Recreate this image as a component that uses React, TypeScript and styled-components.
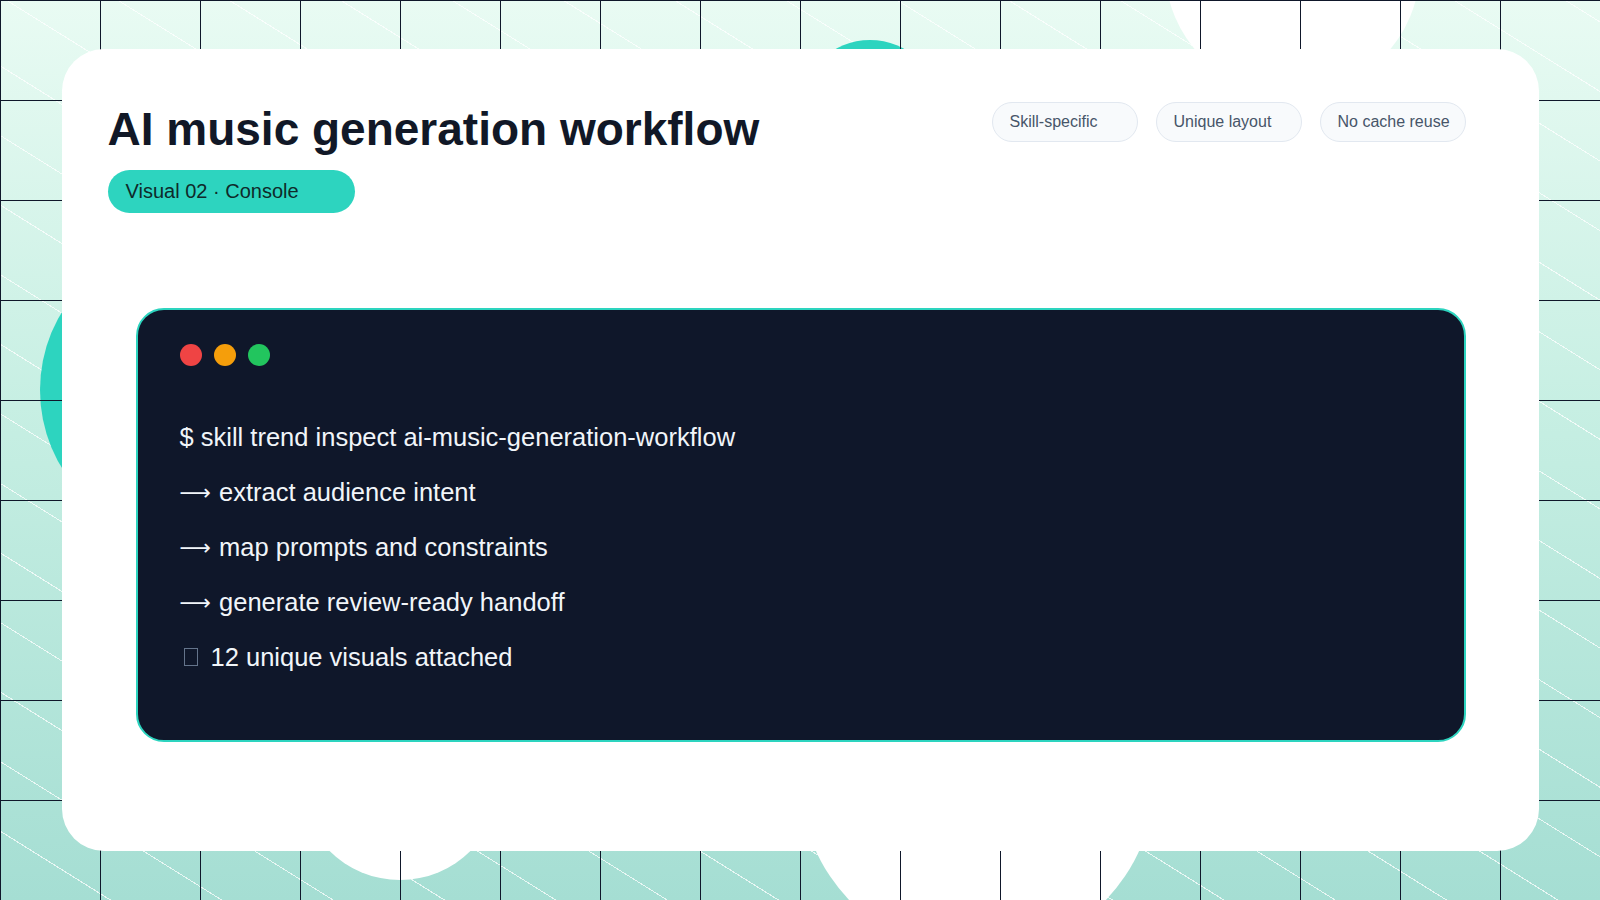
import React from 'react';
import styled, { createGlobalStyle } from 'styled-components';

const GlobalStyle = createGlobalStyle`
  html, body { margin: 0; padding: 0; }
  body { font-family: "Liberation Sans", Arial, sans-serif; }
`;

const Page = styled.div`
  position: relative;
  width: 1600px;
  height: 900px;
  overflow: hidden;
  background: linear-gradient(180deg, #e9fbf3 0%, #c7efe3 45%, #a5ded3 100%);
  display: flex;
  align-items: flex-start;
  justify-content: center;
  padding-top: 49px;
  box-sizing: border-box;
`;

const Stripes = styled.div`
  position: absolute;
  inset: 0;
  background-image: repeating-linear-gradient(
    32deg,
    transparent 0px,
    transparent 58px,
    rgba(255, 255, 255, 0.75) 58px,
    rgba(255, 255, 255, 0.75) 59px
  );
`;

const Blob = styled.div<{ $x: number; $y: number; $size: number; $color: string }>`
  position: absolute;
  left: ${(p) => p.$x}px;
  top: ${(p) => p.$y}px;
  width: ${(p) => p.$size}px;
  height: ${(p) => p.$size}px;
  border-radius: 50%;
  background: ${(p) => p.$color};
`;

const Grid = styled.div`
  position: absolute;
  inset: 0;
  background-image:
    linear-gradient(to right, #0f172a 1px, transparent 1px),
    linear-gradient(to bottom, #0f172a 1px, transparent 1px);
  background-size: 100px 100px;
`;

const Card = styled.div`
  position: relative;
  width: 1477px;
  height: 802px;
  background: #fff;
  border-radius: 42px;
  box-sizing: border-box;
  padding: 55px 73px 0 46px;
  display: flex;
  flex-direction: column;
`;

const Header = styled.div`
  display: flex;
  justify-content: space-between;
  align-items: flex-start;
`;

const TitleBlock = styled.div`
  display: flex;
  flex-direction: column;
  gap: 15px;
`;

const Title = styled.h1`
  margin: 0;
  font-size: 46px;
  font-weight: 700;
  color: #111827;
  line-height: 1.1;
`;

const Badge = styled.div`
  width: 247px;
  height: 43px;
  box-sizing: border-box;
  border-radius: 22px;
  background: #2dd4bf;
  color: #0f2a2a;
  font-size: 20px;
  display: flex;
  align-items: center;
  padding-left: 18px;
`;

const Tags = styled.div`
  display: flex;
  gap: 18px;
  margin-top: -2px;
`;

const Tag = styled.div`
  width: 146px;
  height: 40px;
  box-sizing: border-box;
  border: 1px solid #e2e8f0;
  background: #f8fafc;
  border-radius: 20px;
  color: #475569;
  font-size: 16px;
  display: flex;
  align-items: center;
  padding-left: 17px;
`;

const Console = styled.div`
  margin: 95px 0 0 28px;
  height: 434px;
  background: #0f172a;
  border: 2px solid #2dd4bf;
  border-radius: 28px;
  box-sizing: border-box;
  padding: 34px 42px;
  display: flex;
  flex-direction: column;
`;

const Dots = styled.div`
  display: flex;
  gap: 12px;
  margin-bottom: 44px;
`;

const Dot = styled.span<{ $color: string }>`
  width: 22px;
  height: 22px;
  border-radius: 50%;
  background: ${(p) => p.$color};
`;

const Line = styled.div`
  color: #f1f5f9;
  font-size: 25.5px;
  line-height: 55px;
  display: flex;
  align-items: center;
`;

const Arrow = styled.span`
  font-family: "DejaVu Sans", sans-serif;
  font-size: 22px;
  margin-right: 8px;
`;

const Box = styled.span`
  display: inline-block;
  width: 12px;
  height: 16px;
  border: 1px solid #64748b;
  margin: 0 13px 0 4px;
`;

const steps = ['extract audience intent', 'map prompts and constraints', 'generate review-ready handoff'];

export default function App() {
  return (
    <>
      <GlobalStyle />
      <Page>
        <Stripes />
        <Blob $x={40} $y={240} $size={300} $color="#2dd4bf" />
        <Blob $x={800} $y={40} $size={140} $color="#2dd4bf" />
        <Blob $x={1165} $y={-160} $size={255} $color="#ffffff" />
        <Blob $x={300} $y={680} $size={200} $color="#ffffff" />
        <Blob $x={800} $y={600} $size={355} $color="#ffffff" />
        <Grid />
        <Card>
          <Header>
            <TitleBlock>
              <Title>AI music generation workflow</Title>
              <Badge>Visual 02 · Console</Badge>
            </TitleBlock>
            <Tags>
              <Tag>Skill-specific</Tag>
              <Tag>Unique layout</Tag>
              <Tag>No cache reuse</Tag>
            </Tags>
          </Header>
          <Console>
            <Dots>
              <Dot $color="#ef4444" />
              <Dot $color="#f59e0b" />
              <Dot $color="#22c55e" />
            </Dots>
            <Line>$ skill trend inspect ai-music-generation-workflow</Line>
            {steps.map((s) => (
              <Line key={s}>
                <Arrow>⟶</Arrow>
                {s}
              </Line>
            ))}
            <Line>
              <Box />
              12 unique visuals attached
            </Line>
          </Console>
        </Card>
      </Page>
    </>
  );
}
